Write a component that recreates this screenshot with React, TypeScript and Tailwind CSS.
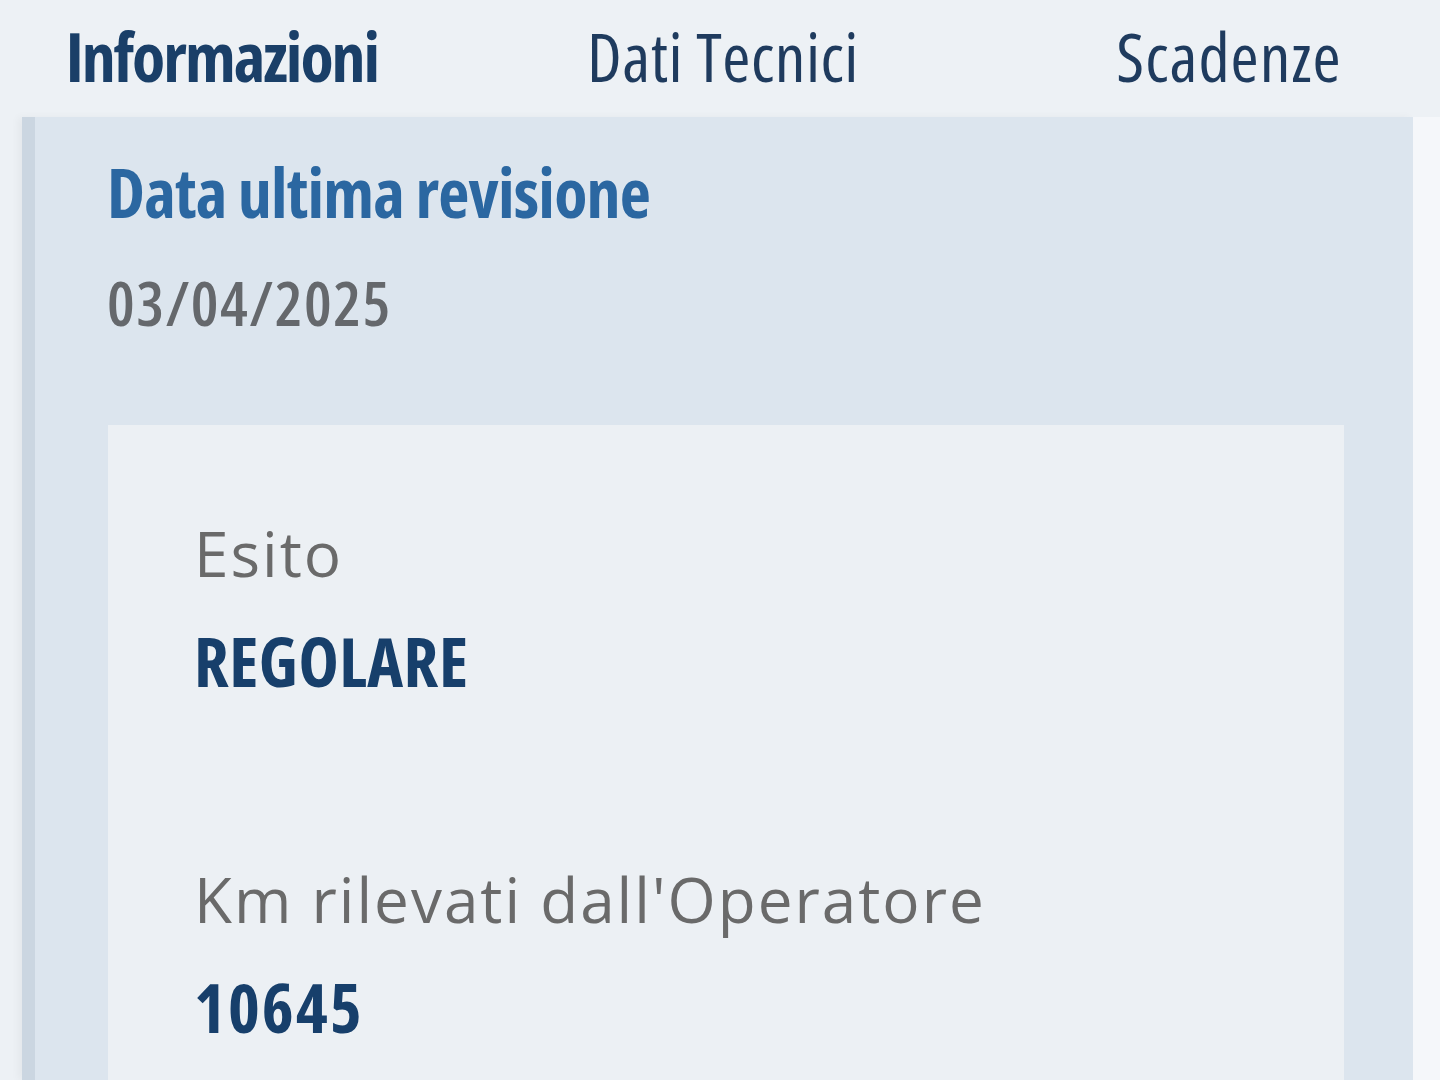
export default function App() {
  return (
    <div className="h-[1080px] w-[1440px] overflow-hidden bg-[#edf1f5] font-['Open_Sans',sans-serif] flex flex-col">
      {/* Tabs */}
      <div className="h-[117px] shrink-0 grid grid-cols-[444px_562px_1fr] pt-[22px] bg-[#edf1f5]">
        <div className="text-center text-[68px] leading-none font-bold font-stretch-condensed tracking-[-2px] text-[#1a3f68]">
          Informazioni
        </div>
        <div className="text-center text-[68px] leading-none font-normal font-stretch-condensed tracking-[0.5px] text-[#1f3b5e] pr-[4px]">
          Dati Tecnici
        </div>
        <div className="text-center text-[68px] leading-none font-normal font-stretch-condensed tracking-[1px] text-[#1f3b5e] pl-[12px]">
          Scadenze
        </div>
      </div>

      {/* Body */}
      <div className="flex flex-1 min-h-0">
        <div className="w-[22px] shrink-0 bg-[#edf1f5]" />
        <div className="flex-1 bg-[#dce5ee] border-l-[13px] border-[#cbd6e1] pl-[72px] pr-[69px] pt-[41px] shadow-[-4px_0_8px_rgba(0,0,0,0.04)]">
          <div className="text-[68px] leading-none font-bold font-stretch-condensed tracking-[-0.8px] text-[#2b67a1]">
            Data ultima revisione
          </div>
          <div className="mt-[45px] text-[62px] leading-none font-semibold font-stretch-condensed tracking-[1.5px] text-[#65686c]">
            03/04/2025
          </div>
          <div className="mt-[92px] ml-[1px] bg-[#ecf0f4] pl-[86px] pt-[97px] h-[700px]">
            <div className="text-[62px] leading-none font-normal font-stretch-normal tracking-[2px] text-[#6a6a6a]">
              Esito
            </div>
            <div className="mt-[43px] text-[68px] leading-none font-bold font-stretch-condensed tracking-[0.5px] text-[#173f6b]">
              REGOLARE
            </div>
            <div className="mt-[173px] text-[62px] leading-none font-normal font-stretch-normal tracking-[2px] text-[#6a6a6a]">
              Km rilevati dall'Operatore
            </div>
            <div className="mt-[43px] text-[68px] leading-none font-bold font-stretch-condensed tracking-[2px] text-[#173f6b]">
              10645
            </div>
          </div>
        </div>
        <div className="w-[27px] shrink-0 bg-[#f5f7fa]" />
      </div>
    </div>
  );
}
